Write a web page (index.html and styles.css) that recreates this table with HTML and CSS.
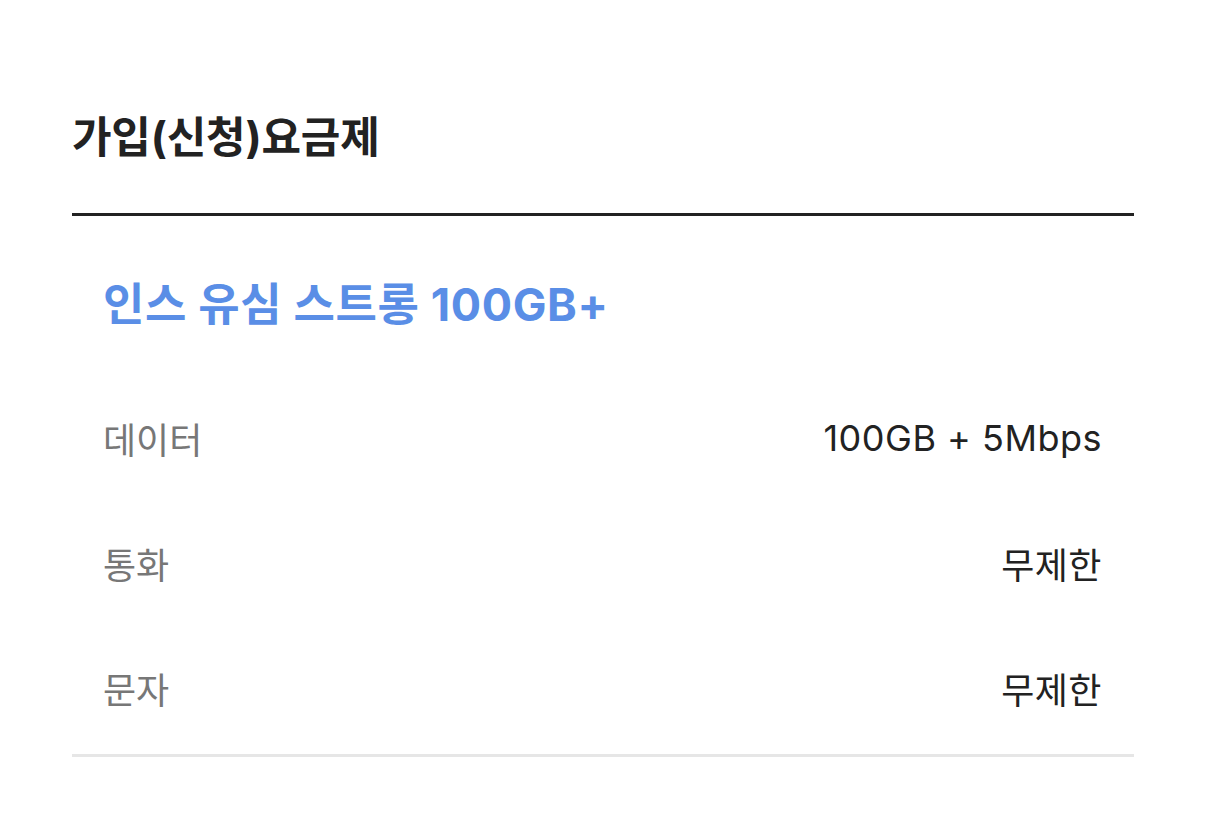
FILE: index.html
```html
<!DOCTYPE html>
<html lang="ko">
<head>
<meta charset="utf-8">
<title>가입(신청)요금제</title>
<link rel="stylesheet" href="styles.css">
</head>
<body>
<div class="page">
  <h2 class="title">가입(신청)요금제</h2>
  <section class="plan">
    <h3 class="plan-name">인스 유심 스트롱 100GB+</h3>
    <dl class="specs">
      <div class="row"><dt>데이터</dt><dd>100GB + 5Mbps</dd></div>
      <div class="row"><dt>통화</dt><dd>무제한</dd></div>
      <div class="row"><dt>문자</dt><dd>무제한</dd></div>
    </dl>
  </section>
</div>
</body>
</html>
```
FILE: styles.css
```css
* { box-sizing: border-box; }
html, body { margin: 0; padding: 0; background: #fff; }
body {
  font-family: "Inter", "Noto Sans CJK KR", "Noto Sans", sans-serif;
  color: #222;
}
.page {
  padding: 113px 72px 0;
}
.title {
  margin: 0;
  font-size: 43px;
  line-height: 48px;
  font-weight: 700;
  color: #222;
  letter-spacing: -0.2px;
  padding-bottom: 52px;
  border-bottom: 3px solid #222;
}
.plan {
  padding: 65px 32px 0 31px;
  border-bottom: 3px solid #e6e6e6;
}
.plan-name {
  margin: 0;
  font-size: 45px;
  line-height: 48px;
  font-weight: 700;
  color: #5a8ee6;
  letter-spacing: 0.6px;
}
.specs {
  margin: 46px 0 0;
  padding-bottom: 4px;
}
.row {
  display: flex;
  justify-content: space-between;
  align-items: center;
  height: 125px;
  font-size: 36px;
}
.row dt {
  color: #777;
}
.row dd {
  margin: 0;
  color: #222;
  letter-spacing: 0.5px;
}
```
